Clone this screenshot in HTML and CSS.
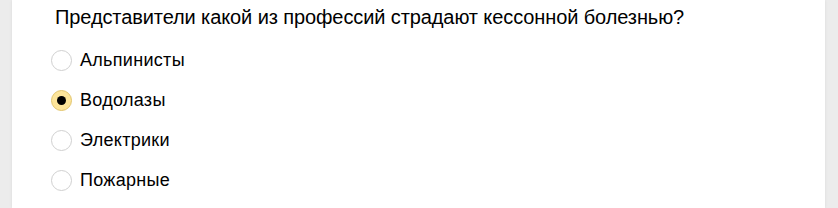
FILE: index.html
```html
<html lang="ru">
    <head>
        <meta charset="UTF-8">
        <title>Вопрос</title>
        <link rel="stylesheet" href="styles.css">
    </head>
    <body>
        <div class="card">
            <div class="question">Представители какой из профессий страдают кессонной болезнью?</div>
            <div class="options">
                <label class="option"><span class="radio"></span>Альпинисты</label>
                <label class="option checked"><span class="radio"></span>Водолазы</label>
                <label class="option"><span class="radio"></span>Электрики</label>
                <label class="option"><span class="radio"></span>Пожарные</label>
            </div>
        </div>
    </body>
</html>
```

FILE: styles.css
```css
body {
	margin: 0;
	background-color: #ececec;
	font-family: "Liberation Sans", Arial, sans-serif;
	color: #000;
}
div.card {
	height: 208px;
	margin: 0 13px 0 12px;
	padding: 0 0 0 39px;
	background-color: #fff;
	box-shadow: 0 0 3px rgba(0, 0, 0, 0.08);
	box-sizing: border-box;
}
div.question {
	font-size: 20px;
	line-height: 24px;
	letter-spacing: -0.1px;
	padding: 5px 0 0 4px;
}
div.options {
	display: flex;
	flex-direction: column;
	padding-top: 11px;
}
label.option {
	display: flex;
	flex-direction: row;
	align-items: center;
	height: 40px;
	font-size: 18px;
	letter-spacing: 0.3px;
	cursor: pointer;
}
span.radio {
	width: 19px;
	height: 19px;
	border: 1px solid #d0d0d0;
	border-radius: 50%;
	margin-right: 8px;
	background-color: #fff;
	display: flex;
	align-items: center;
	justify-content: center;
}
label.checked > span.radio {
	background-color: #fde59a;
	border-color: #e2c56e;
}
label.checked > span.radio::after {
	content: "";
	width: 9px;
	height: 9px;
	border-radius: 50%;
	background-color: #000;
}
```
